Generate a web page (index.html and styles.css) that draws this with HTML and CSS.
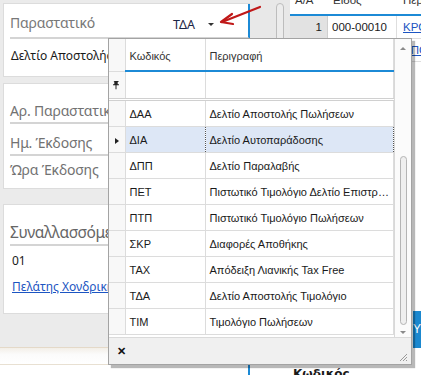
FILE: index.html
```html
<!DOCTYPE html>
<html lang="el">
<head>
    <meta charset="UTF-8">
    <meta name="viewport" content="width=device-width, initial-scale=1.0">
    <title>Παραστατικό</title>
    <link rel="stylesheet" href="styles.css">
</head>
<body>
    <div class="screen">
        <div class="form">
            <div class="panel panel-doc">
                <div class="combo-row">
                    <span class="label">Παραστατικό</span>
                    <span class="combo-value">ΤΔΑ</span>
                    <span class="caret"></span>
                </div>
                <div class="value-row">Δελτίο Αποστολής Τιμολόγιο</div>
            </div>

            <div class="panel panel-info">
                <div class="info-row first">Αρ. Παραστατικού</div>
                <div class="info-row second">Ημ. Έκδοσης</div>
                <div class="info-row third">Ώρα Έκδοσης</div>
            </div>

            <div class="panel panel-party">
                <div class="party-title">Συναλλασσόμενος</div>
                <div class="party-code">01</div>
                <a class="party-link" href="#">Πελάτης Χονδρικής</a>
            </div>

            <div class="form-foot"></div>
        </div>

        <div class="gutter">
            <div class="gutter-thumb"></div>
        </div>

        <div class="docs">
            <div class="docs-head">
                <span class="dh-aa">Α/Α</span>
                <span class="dh-kind">Είδος</span>
                <span class="dh-more">Περιγραφή</span>
            </div>
            <div class="docs-row">
                <span class="dc-aa">1</span>
                <span class="dc-kind">000-00010</span>
                <a class="dc-more" href="#">ΚΡΟΥΑΣΑΝ</a>
            </div>
            <div class="docs-row">
                <span class="dc-aa"></span>
                <span class="dc-kind"></span>
                <a class="dc-more" href="#">ΑΠΟΡΡ</a>
            </div>
            <div class="docs-fill">
                <div class="docs-button">Υπ</div>
            </div>
        </div>
    </div>

    <div class="bottom-strip">
        <div class="bs-left"></div>
        <div class="bs-right">Κωδικός</div>
    </div>

    <!-- lookup popup over the form -->
    <div class="popup">
        <div class="popup-body">
            <table class="lookup">
                <colgroup>
                    <col class="c-sel">
                    <col class="c-code">
                    <col class="c-desc">
                </colgroup>
                <thead>
                    <tr class="head-row">
                        <th class="sel"></th>
                        <th>Κωδικός</th>
                        <th>Περιγραφή</th>
                    </tr>
                    <tr class="filter-row">
                        <td class="sel">
                            <svg width="7" height="10" viewBox="0 0 7 10"><path d="M1.5 1h4v1h-0.8v2.2h1.3v1h-2.5v4h-1v-4h-2.5v-1h1.3v-2.2h-0.8z" fill="#222"/></svg>
                        </td>
                        <td></td>
                        <td></td>
                    </tr>
                </thead>
                <tbody>
                    <tr><td class="sel"></td><td>ΔΑΑ</td><td>Δελτίο Αποστολής Πωλήσεων</td></tr>
                    <tr class="current"><td class="sel"><span class="pointer"></span></td><td>ΔΙΑ</td><td>Δελτίο Αυτοπαράδοσης</td></tr>
                    <tr><td class="sel"></td><td>ΔΠΠ</td><td>Δελτίο Παραλαβής</td></tr>
                    <tr><td class="sel"></td><td>ΠΕΤ</td><td>Πιστωτικό Τιμολόγιο Δελτίο Επιστροφής</td></tr>
                    <tr><td class="sel"></td><td>ΠΤΠ</td><td>Πιστωτικό Τιμολόγιο Πωλήσεων</td></tr>
                    <tr><td class="sel"></td><td>ΣΚΡ</td><td>Διαφορές Αποθήκης</td></tr>
                    <tr><td class="sel"></td><td>ΤΑΧ</td><td>Απόδειξη Λιανικής Tax Free</td></tr>
                    <tr><td class="sel"></td><td>ΤΔΑ</td><td>Δελτίο Αποστολής Τιμολόγιο</td></tr>
                    <tr><td class="sel"></td><td>ΤΙΜ</td><td>Τιμολόγιο Πωλήσεων</td></tr>
                </tbody>
            </table>
            <div class="vscroll">
                <span class="arrow up"></span>
                <div class="track"><div class="thumb"></div></div>
                <span class="arrow down"></span>
            </div>
        </div>
        <div class="popup-foot">
            <span class="close">✕</span>
            <svg class="grip" width="10" height="10" viewBox="0 0 10 10">
                <path d="M9 2L2 9M9 5L5 9M9 8L8 9" stroke="#9a9a9a" stroke-width="1"/>
            </svg>
        </div>
    </div>

    <!-- red annotation arrow -->
    <svg class="note-arrow" width="50" height="26" viewBox="0 0 50 26">
        <path d="M45 3L7 18" stroke="#c01818" stroke-width="2.2" fill="none" stroke-linecap="round"/>
        <path d="M17 10L6 18L18 20" stroke="#c01818" stroke-width="2.2" fill="none" stroke-linecap="round" stroke-linejoin="round"/>
    </svg>
</body>
</html>
```

FILE: styles.css
```css
body {
    margin: 0;
    width: 421px;
    height: 375px;
    overflow: hidden;
    position: relative;
    background-color: #ebebeb;
    font-family: "Noto Sans", "Open Sans", sans-serif;
    color: #1a1a1a;
}

.screen {
    display: flex;
    height: 365px;
}

/* left form */
.form {
    flex: 0 0 247px;
    margin-left: 3px;
    display: flex;
    flex-direction: column;
}

.panel {
    background-color: #fff;
    border: 1px solid #dcdcdc;
    box-sizing: border-box;
}

.panel-doc {
    margin-top: 3px;
    height: 74px;
    border-right: none;
}

.combo-row {
    display: flex;
    align-items: center;
    height: 35px;
    margin-left: 6px;
    border-bottom: 2px solid #d4d4d4;
    border-right: 2px solid #1c8ad6;
    box-sizing: border-box;
}

.label {
    font-size: 14px;
    letter-spacing: -0.2px;
    color: #787878;
    flex: 1;
    padding-top: 4px;
}

.combo-value {
    font-size: 12.5px;
    color: #1c2544;
    padding: 7px 0 0 4px;
}

.caret {
    width: 0;
    height: 0;
    border-left: 3px solid transparent;
    border-right: 3px solid transparent;
    border-top: 3px solid #333;
    margin: 7px 34px 0 13px;
}

.value-row {
    font-size: 12px;
    padding: 8px 0 0 7px;
    white-space: nowrap;
}

.panel-info {
    margin-top: 6px;
    height: 106px;
    padding-left: 6px;
}

.info-row {
    font-size: 14px;
    letter-spacing: -0.2px;
    color: #727272;
    line-height: 22px;
    white-space: nowrap;
}

.info-row.first {
    padding-top: 16px;
    border-bottom: 2px solid #d4d4d4;
}

.info-row.second {
    padding-top: 8px;
    border-bottom: 2px solid #d4d4d4;
}

.info-row.third {
    padding-top: 3px;
}

.panel-party {
    margin-top: 15px;
    height: 110px;
    padding-left: 6px;
}

.party-title {
    font-size: 15.5px;
    letter-spacing: -0.3px;
    color: #666;
    line-height: 24px;
    padding-top: 15px;
    border-bottom: 2px solid #d4d4d4;
    white-space: nowrap;
}

.party-code {
    font-size: 12px;
    padding: 6px 0 0 2px;
}

.party-link {
    display: block;
    font-size: 12px;
    color: #1c55c2;
    margin: 9px 0 0 2px;
    white-space: nowrap;
}

.form-foot {
    margin-top: auto;
    height: 16px;
    border-top: 1px solid #e4d9c8;
    border-bottom: 1px solid #e8e0d2;
    background: linear-gradient(#f3efe8, #fbfbfb 40%, #fff);
    margin-left: -3px;
}

/* scroll gutter between form and documents */
.gutter {
    flex: 0 0 40px;
    background-color: #e8e8e8;
}

.gutter-thumb {
    width: 6px;
    height: 340px;
    margin: 3px 0 0 26px;
    border: 1px solid #bdbdbd;
    border-radius: 4px;
    background-color: #ececec;
}

/* documents grid on the right */
.docs {
    flex: 1;
    min-width: 0;
    display: flex;
    flex-direction: column;
    background-color: #fff;
    font-family: "Liberation Sans", Arial, sans-serif;
    font-size: 11.5px;
    overflow: hidden;
}

.docs-head {
    display: flex;
    height: 14px;
    align-items: flex-end;
    border-bottom: 2px solid #1c8ad6;
    overflow: hidden;
    color: #333;
}

.docs-head span {
    line-height: 11px;
    margin-bottom: 8px;
    white-space: nowrap;
}

.dh-aa { flex: 0 0 38px; padding-left: 5px; box-sizing: border-box; }
.dh-kind { flex: 0 0 69px; padding-left: 5px; box-sizing: border-box; }
.dh-more { padding-left: 6px; }

.docs-row {
    display: flex;
    height: 22px;
    border-bottom: 1px solid #dedede;
}

.dc-aa {
    flex: 0 0 38px;
    background-color: #e2e2e2;
    border-right: 1px solid #cfcfcf;
    text-align: right;
    padding-right: 5px;
    line-height: 22px;
    box-sizing: border-box;
}

.dc-kind {
    flex: 0 0 69px;
    padding-left: 4px;
    line-height: 22px;
    border-right: 1px solid #dedede;
    box-sizing: border-box;
    white-space: nowrap;
}

.dc-more {
    padding-left: 6px;
    line-height: 22px;
    color: #1c55c2;
    white-space: nowrap;
}

.docs-fill {
    flex: 1;
    display: flex;
    flex-direction: column;
    justify-content: flex-end;
}

.docs-button {
    align-self: flex-end;
    width: 8px;
    height: 37px;
    margin-bottom: 17px;
    background-color: #1b88cf;
    color: #fff;
    overflow: hidden;
    line-height: 37px;
    font-size: 12px;
}

.bottom-strip {
    display: flex;
    height: 10px;
    background-color: #fff;
}

.bs-left {
    flex: 0 0 248px;
    border-right: 2px solid #1c8ad6;
}

.bs-right {
    padding-left: 43px;
    font-family: "DejaVu Sans", sans-serif;
    font-size: 12px;
    font-weight: bold;
    line-height: 16px;
    margin-top: 1px;
}

/* lookup popup */
.popup {
    position: absolute;
    left: 108px;
    top: 38px;
    width: 304px;
    height: 327px;
    box-sizing: border-box;
    border: 1px solid #a3a3a3;
    background-color: #fff;
    box-shadow: 3px 3px 1px rgba(0, 0, 0, 0.28);
    display: flex;
    flex-direction: column;
    font-family: "Liberation Sans", Arial, sans-serif;
    font-size: 11px;
    color: #1a1a1a;
}

.popup-body {
    display: flex;
    height: 298px;
}

.lookup {
    flex: 0 0 284px;
    width: 284px;
    border-collapse: collapse;
    table-layout: fixed;
    align-self: flex-start;
}

.c-sel { width: 16px; }
.c-code { width: 80px; }
.c-desc { width: 188px; }

.lookup td,
.lookup th {
    padding: 0 0 0 4px;
    border: 1px solid #dcdcdc;
    white-space: nowrap;
    overflow: hidden;
    text-overflow: ellipsis;
    text-align: left;
    font-weight: normal;
}

.lookup tr > :first-child {
    border-left: none;
}

.lookup .sel {
    padding: 0;
    background-color: #f8f8f8;
    text-align: center;
}

.head-row th {
    height: 29px;
    border-top: none;
    padding-top: 2px;
    color: #333;
}

.head-row th + th {
    border-bottom: 2px solid #1c8ad6;
}

.filter-row td {
    height: 26px;
    border-bottom: 3px double #d0d0d0;
}

.filter-row svg {
    display: block;
    margin: 1px auto 0;
}

.lookup tbody td {
    height: 25px;
}

.lookup tr.current td {
    background-color: #dde7f6;
    border: 1px dotted #555;
}

.lookup tr.current td.sel {
    background-color: #f8f8f8;
    border: 1px solid #dcdcdc;
    border-left: none;
}

.pointer {
    display: inline-block;
    width: 0;
    height: 0;
    border-top: 3px solid transparent;
    border-bottom: 3px solid transparent;
    border-left: 4px solid #222;
    vertical-align: middle;
}

.vscroll {
    flex: 1;
    display: flex;
    flex-direction: column;
    align-items: center;
    background-color: #fbfbfb;
    border-left: 1px solid #d8d8d8;
}

.arrow {
    width: 0;
    height: 0;
    border-left: 3px solid transparent;
    border-right: 3px solid transparent;
}

.arrow.up {
    margin-top: 8px;
    border-bottom: 3px solid #8a8a8a;
}

.arrow.down {
    margin-bottom: 3px;
    border-top: 3px solid #8a8a8a;
}

.track {
    flex: 1;
    display: flex;
    flex-direction: column;
    justify-content: flex-end;
    padding: 0 0 6px 1px;
}

.thumb {
    width: 5px;
    height: 167px;
    border: 1px solid #b4b4b4;
    border-radius: 4px;
    background-color: #efefef;
}

.popup-foot {
    flex: 1;
    display: flex;
    align-items: center;
    justify-content: space-between;
    padding: 0 3px 0 8px;
    background-color: #f0f0f0;
    border-top: 1px solid #dadada;
}

.close {
    font-size: 11px;
    font-weight: bold;
    color: #111;
}

.grip {
    align-self: flex-end;
    margin-bottom: 2px;
}

.note-arrow {
    position: absolute;
    left: 215px;
    top: 4px;
}
```
